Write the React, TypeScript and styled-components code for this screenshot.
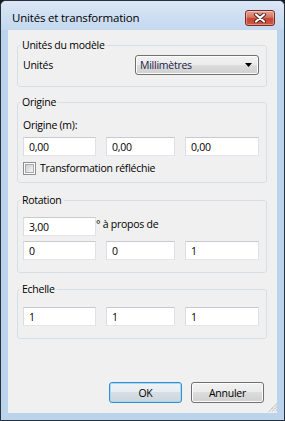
import styled, { createGlobalStyle } from 'styled-components';

const GlobalStyle = createGlobalStyle`
  html, body {
    margin: 0;
    padding: 0;
    background: #1b1b1b;
  }
`;

const Window = styled.div`
  width: 285px;
  height: 421px;
  box-sizing: border-box;
  border: 1px solid #25313d;
  border-radius: 6px 6px 0 0;
  background: #bcd3ec;
  display: flex;
  flex-direction: column;
  overflow: hidden;
  font-family: 'Open Sans', 'Noto Sans', sans-serif;
  font-size: 10.5px;
  letter-spacing: -0.25px;
  color: #000;
`;

const TitleBar = styled.div`
  height: 29px;
  box-sizing: border-box;
  padding: 4px 9px 0 11px;
  display: flex;
  align-items: center;
  justify-content: space-between;
  background: linear-gradient(#dbe7f5, #c3d8ef);
`;

const Title = styled.span`
  font-size: 11.5px;
  line-height: 16px;
  letter-spacing: -0.2px;
`;

const CloseButton = styled.div`
  width: 30px;
  height: 16px;
  box-sizing: border-box;
  border: 1px solid #7d2b23;
  border-radius: 3px;
  background: linear-gradient(#e6a59a 0%, #d6725f 45%, #c74430 55%, #cf5a45 100%);
  box-shadow: inset 0 0 0 1px rgba(255, 255, 255, 0.35);
  display: flex;
  align-items: center;
  justify-content: center;
`;

const Client = styled.div`
  flex: 1;
  margin: 0 7px 7px 7px;
  background: #f0f0f0;
  display: flex;
  flex-direction: column;
  padding: 8px 10px 0 9px;
`;

const Group = styled.fieldset<{ $top: number; $pt: number; $pb: number }>`
  margin: ${({ $top }) => $top}px 0 0 0;
  padding: ${({ $pt }) => $pt}px 0 ${({ $pb }) => $pb}px 5px;
  border: 1px solid #d5dfe5;
  border-radius: 3px;
  min-width: 0;
`;

const Legend = styled.legend`
  margin-left: -3px;
  padding: 0 2px;
  line-height: 15px;
`;

const Label = styled.div`
  line-height: 15px;
  white-space: nowrap;
`;

const UnitRow = styled.div`
  display: grid;
  grid-template-columns: 112px 124px;
  align-items: center;
`;

const Combo = styled.div`
  height: 20px;
  box-sizing: border-box;
  border: 1px solid #707070;
  border-radius: 3px;
  background: linear-gradient(#f2f2f2 0%, #ebebeb 50%, #dddddd 50%, #cfcfcf 100%);
  box-shadow: inset 0 0 0 1px #fcfcfc;
  display: flex;
  align-items: center;
  justify-content: space-between;
  padding: 0 6px 0 4px;
  color: #1a1a48;
`;

const Triples = styled.div<{ $gap?: number }>`
  display: grid;
  grid-template-columns: 73px 69px 74px;
  column-gap: 10px;
  margin-top: ${({ $gap }) => $gap ?? 0}px;
`;

const Field = styled.input`
  display: block;
  width: 100%;
  height: 19px;
  box-sizing: border-box;
  margin: 0;
  padding: 0 5px;
  border: 1px solid;
  border-color: #c6c9ce #dfe2e7 #e3e6ea #dadde3;
  background: #fff;
  font: inherit;
  letter-spacing: inherit;
  color: #000;
  outline: none;
`;

const AngleRow = styled.div`
  display: grid;
  grid-template-columns: 73px auto;
  align-items: start;
`;

const CheckRow = styled.label`
  display: flex;
  align-items: center;
  gap: 4px;
  margin-top: 5px;
  line-height: 15px;
`;

const CheckBox = styled.span`
  width: 13px;
  height: 13px;
  box-sizing: border-box;
  border: 1px solid #8e8f8f;
  background: #fff;
  padding: 1px;
  display: flex;

  &::before {
    content: '';
    flex: 1;
    border: 1px solid #a8a8a8;
    background: linear-gradient(135deg, #cbcfd5, #f6f6f6);
  }
`;

const Footer = styled.div`
  margin: auto -10px 0 0;
  display: flex;
  justify-content: flex-end;
  align-items: flex-end;
  gap: 9px;
  padding-bottom: 1px;
`;

const Button = styled.button<{ $default?: boolean }>`
  width: 73px;
  height: 21px;
  margin: 0 0 9px 0;
  padding: 0;
  border: 1px solid ${({ $default }) => ($default ? '#3c8ccc' : '#707070')};
  border-radius: 3px;
  background: ${({ $default }) =>
    $default
      ? 'linear-gradient(#eef3f7 0%, #e6edf2 50%, #d7dfe5 50%, #ccd5dc 100%)'
      : 'linear-gradient(#f2f2f2 0%, #ebebeb 50%, #dddddd 50%, #cfcfcf 100%)'};
  box-shadow: inset 0 0 0 1px ${({ $default }) => ($default ? '#9fdcf6' : '#fcfcfc')};
  font: inherit;
  letter-spacing: inherit;
  color: #000;
`;

const Grip = styled.svg`
  margin-left: -5px;
  flex: none;
`;

export default function App() {
  return (
    <>
      <GlobalStyle />
      <Window>
        <TitleBar>
          <Title>Unités et transformation</Title>
          <CloseButton>
            <svg width="14" height="10" viewBox="0 0 14 10">
              <path d="M3 1.5 L11 8.5 M11 1.5 L3 8.5" stroke="#4a2220" strokeWidth="4" strokeLinecap="round" />
              <path d="M3 1.5 L11 8.5 M11 1.5 L3 8.5" stroke="#ffffff" strokeWidth="2.2" strokeLinecap="round" />
            </svg>
          </CloseButton>
        </TitleBar>
        <Client>
          <Group $top={0} $pt={2} $pb={11}>
            <Legend>Unités du modèle</Legend>
            <UnitRow>
              <Label>Unités</Label>
              <Combo>
                <span>Millimètres</span>
                <svg width="7" height="4" viewBox="0 0 7 4">
                  <path d="M0 0 H7 L3.5 4 Z" fill="#000" />
                </svg>
              </Combo>
            </UnitRow>
          </Group>

          <Group $top={8} $pt={8} $pb={6}>
            <Legend>Origine</Legend>
            <Label>Origine (m):</Label>
            <Triples $gap={4}>
              <Field defaultValue="0,00" />
              <Field defaultValue="0,00" />
              <Field defaultValue="0,00" />
            </Triples>
            <CheckRow>
              <CheckBox />
              <span>Transformation réfléchie</span>
            </CheckRow>
          </Group>

          <Group $top={10} $pt={9} $pb={12}>
            <Legend>Rotation</Legend>
            <AngleRow>
              <Field defaultValue="3,00" />
              <Label>° à propos de</Label>
            </AngleRow>
            <Triples $gap={5}>
              <Field defaultValue="0" />
              <Field defaultValue="0" />
              <Field defaultValue="1" />
            </Triples>
          </Group>

          <Group $top={9} $pt={10} $pb={12}>
            <Legend>Echelle</Legend>
            <Triples>
              <Field defaultValue="1" />
              <Field defaultValue="1" />
              <Field defaultValue="1" />
            </Triples>
          </Group>

          <Footer>
            <Button $default>OK</Button>
            <Button>Annuler</Button>
            <Grip width="9" height="9" viewBox="0 0 9 9">
              <path d="M8.5 1 L1 8.5 M8.5 4 L4 8.5 M8.5 7 L7 8.5" stroke="#7d7d7d" strokeWidth="1" strokeDasharray="1 1" />
            </Grip>
          </Footer>
        </Client>
      </Window>
    </>
  );
}
